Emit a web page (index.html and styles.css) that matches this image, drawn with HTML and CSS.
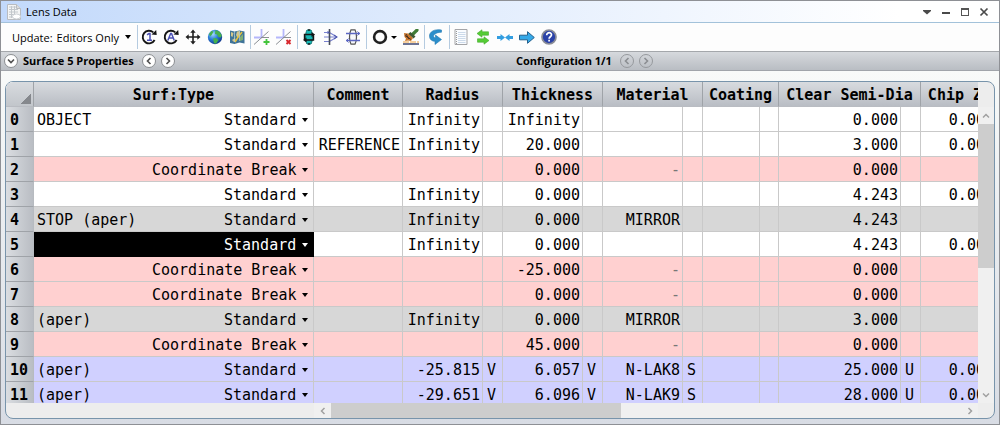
FILE: index.html
```html
<!DOCTYPE html>
<html lang="en">
<head>
<meta charset="utf-8">
<title>Lens Data</title>
<link rel="stylesheet" href="styles.css">
</head>
<body>
<main class="window">
  <header class="titlebar">
    <svg class="title-icon" width="14" height="16" viewBox="0 0 14 16"><path d="M.5.5h9l4 4v11H.5z" fill="#f4f5f5" stroke="#b9bcc0"/><path d="M2 3h7M2 5.500h9M2 8h9M2 10.500h6M2 13h5M4.500 2v12M7.500 2v9" stroke="#c3c8cc" fill="none"/><path d="M9.500.5v4h4" fill="#ddd" stroke="#b9bcc0"/><ellipse cx="9.500" cy="12.500" rx="4" ry="2.500" fill="#fff" stroke="#ccd0d4"/></svg>
    <h1 class="title">Lens Data</h1>
    <div class="window-controls">
      <button class="win-btn" aria-label="Window menu"><svg width="10" height="10" viewBox="0 0 10 10"><path d="M1 3h8v1L5 7.500 1 4z" fill="#4a4a4a"/></svg></button>
      <button class="win-btn" aria-label="Minimize"><svg width="10" height="10" viewBox="0 0 10 10"><path d="M1 5h8v2H1z" fill="#4a4a4a"/></svg></button>
      <button class="win-btn" aria-label="Maximize"><svg width="10" height="10" viewBox="0 0 10 10"><path d="M1 1.500h8M1.500 1v8M8.500 1v8M1 8.500h8M1 2.500h8" fill="none" stroke="#555"/></svg></button>
      <button class="win-btn" aria-label="Close"><svg width="10" height="10" viewBox="0 0 10 10"><path d="M1.500 1.500l7 7M8.500 1.500l-7 7" stroke="#4a4a4a" stroke-width="1.700"/></svg></button>
    </div>
  </header>

  <div class="toolbar" role="toolbar" aria-label="Lens data tools">
    <div class="update">
      <label for="update">Update:</label>
      <span class="dropdown"><select id="update"><option>Editors Only</option></select></span>
    </div>
    <span class="sep"></span>
    <button class="tool" aria-label="Update once"><svg width="16" height="16" viewBox="0 0 16 16"><path d="M12.300 3.400A6.300 6.300 0 1 0 13.600 11" fill="none" stroke="#151515" stroke-width="1.900"/><path d="M10.500 5.500L15.700 6l-.5-5z" fill="#151515"/><path d="M6 5.800l2-1.300h1v6.500M6 11.300h5" fill="none" stroke="#4a50b5" stroke-width="1.500"/></svg></button>
    <button class="tool" aria-label="Update all"><svg width="16" height="16" viewBox="0 0 16 16"><path d="M12.300 3.400A6.300 6.300 0 1 0 13.600 11" fill="none" stroke="#151515" stroke-width="1.900"/><path d="M10.500 5.500L15.700 6l-.5-5z" fill="#151515"/><path d="M4.800 11.500L7.700 4.500h.8l2.800 7M6 9h4.300" fill="none" stroke="#4a50b5" stroke-width="1.500"/></svg></button>
    <button class="tool" aria-label="Move"><svg width="16" height="16" viewBox="0 0 16 16"><path d="M8 2v12M2 8h12" stroke="#202020" stroke-width="1.600"/><path d="M8 .5l2.700 3.200H5.300zM8 15.500l2.700-3.200H5.300zM.5 8l3.200-2.700v5.400zM15.500 8l-3.200-2.700v5.400z" fill="#202020"/></svg></button>
    <button class="tool" aria-label="Globe"><svg width="16" height="16" viewBox="0 0 16 16"><defs><radialGradient id="globe" cx=".35" cy=".3" r=".8"><stop offset="0" stop-color="#a8dcff"/><stop offset=".45" stop-color="#2c7fda"/><stop offset="1" stop-color="#0a2a80"/></radialGradient></defs><circle cx="8" cy="8" r="7.200" fill="url(#globe)"/><path d="M8.500 1l4 1.700 2.300 3.500-.8 2.300-2.500-.5-1.500-2.500L8 5zM2 5l2.500-3 2 .5L5 5.500 3 7.500zM6 9.500l3-.5 2.500 2L9 14.800l-2-.5z" fill="#45b04e"/></svg></button>
    <button class="tool" aria-label="Map"><svg width="16" height="16" viewBox="0 0 16 16"><path d="M1 1.500l4.500 1 5-1 5 1v12l-5-1-5 1.500-4.500-1z" fill="#3f7398"/><path d="M2 3l2.500 1L3.500 8 2 7zM8 2.500l3-.5-.5 4-2 3L7 6zM3 11l3-2 1 3-2 1z" fill="#d3c68c"/><path d="M11 8l3-3v6l-3 1zM5 6l2 2-1.500 1z" fill="#7fae74"/><path d="M13 3L8.500 9 6 13" fill="none" stroke="#e5c13d" stroke-width="1.500"/><path d="M5.500 2v11M10.500 2v10" stroke="#b5cddd" stroke-width=".7"/></svg></button>
    <span class="sep"></span>
    <button class="tool" aria-label="Insert axis"><svg width="16" height="16" viewBox="0 0 16 16"><path d="M7.500 0v8M0 8.500h7.500" stroke="#b5b7fb" stroke-width="1.800" fill="none"/><path d="M0 15.500L14.500 2.500M7 8.500h8" stroke="#8b8f94" fill="none"/><path d="M12.500 10v6M9.500 13h6" stroke="#43c43b" stroke-width="1.800"/></svg></button>
    <button class="tool" aria-label="Delete axis"><svg width="16" height="16" viewBox="0 0 16 16"><path d="M7.500 0v8M0 8.500h7.500" stroke="#b5b7fb" stroke-width="1.800" fill="none"/><path d="M0 15.500L14.500 2.500M7 8.500h8" stroke="#8b8f94" fill="none"/><path d="M10.500 11l4 4M14.500 11l-4 4" stroke="#d7262c" stroke-width="1.900"/></svg></button>
    <span class="sep"></span>
    <button class="tool" aria-label="Reverse elements"><svg width="16" height="16" viewBox="0 0 16 16"><path d="M6 1h4c2 4 2 10 0 14H6C4 11 4 5 6 1z" fill="#18b7b4" stroke="#087270"/><path d="M8 0v2M8 14v2M3.500 11V5.500H12M12.500 5v6H4" fill="none" stroke="#151515" stroke-width="1.400"/><path d="M10.500 3L14 5.500 10.500 8zM5.500 8.500L2 11l3.500 2.500z" fill="#151515"/></svg></button>
    <button class="tool" aria-label="Lens focus"><svg width="16" height="16" viewBox="0 0 16 16"><path d="M1 3.500h5.500L14 8l-7.500 4.500H1M1 8h13" fill="none" stroke="#7880cf" stroke-width="1.200"/><path d="M6.500 0v16" stroke="#444a58" stroke-width="1.600"/><path d="M4.500 2.500l2 1-2 1M11 6l3 2-3 2" fill="none" stroke="#4b55a9"/></svg></button>
    <button class="tool" aria-label="Lens rays"><svg width="16" height="16" viewBox="0 0 16 16"><path d="M6 .8h4c2 4 2 10.400 0 14.400H6C4 11.200 4 4.800 6 .8z" fill="#f7f8fa" stroke="#555" stroke-width="1.200"/><path d="M1 4.500h14M1 11.500h14" stroke="#5c67c3" stroke-width="1.500"/><path d="M12.500 2.500l2 2-2 2M3.500 9.500l-2 2 2 2" fill="none" stroke="#5c67c3"/></svg></button>
    <span class="sep"></span>
    <button class="tool tool-menu" aria-label="Aperture"><svg width="16" height="16" viewBox="0 0 16 16"><circle cx="8" cy="8" r="5.900" fill="none" stroke="#202020" stroke-width="2.600"/></svg></button>
    <button class="tool" aria-label="Paint"><svg width="16" height="16" viewBox="0 0 16 16"><path d="M14 1l-4 4" stroke="#3f7c35" stroke-width="3.200" stroke-linecap="round"/><path d="M7.500 3l5 4.500-2 2-5.500-4.500z" fill="#3d5a34"/><path d="M1 4l4 .5 5 4.500-2 3-3-.5-3 .5 1-2.500L1.500 8z" fill="#c8752c"/><path d="M3 5l3 5M2 6.500l6 4" stroke="#4b321f"/><path d="M0 13h16" stroke="#efa13f" stroke-width="1.200" stroke-dasharray="6 1"/><path d="M0 15h16" stroke="#202b5b" stroke-width="1.300"/></svg></button>
    <span class="sep"></span>
    <button class="tool" aria-label="Undo"><svg width="16" height="16" viewBox="0 0 16 16"><path d="M13.500 1C6.500-.5 1 3 1.500 7.500 1.700 10.500 4 12.300 7 12.300V15.500L13.500 10.500 7.500 6v2.800C4 8.500 5 3.500 13.500 3.200z" fill="#2c8ecb" stroke="#277cb4" stroke-width=".6"/></svg></button>
    <span class="sep"></span>
    <button class="tool" aria-label="Report"><svg width="16" height="16" viewBox="0 0 16 16"><path d="M2 .5h12v15H2z" fill="#fafcff" stroke="#a4a5a8"/><path d="M5 3.500h7.500M5 5.500h7.500M5 7.500h7.500M5 9.500h7.500M5 11.500h7.500M5 13.500h7.500" stroke="#ccdaea"/><path d="M3.500 2v13" stroke="#999" stroke-dasharray="1 1"/></svg></button>
    <button class="tool" aria-label="Swap"><svg width="16" height="16" viewBox="0 0 16 16"><path d="M2 4.500L7 .8v2h6.500v3.400H7v2z" fill="#55cc35" stroke="#45a92d" stroke-width=".6"/><path d="M14 11.500L9 7.800v2H2.500v3.400H9v2z" fill="#55cc35" stroke="#45a92d" stroke-width=".6"/></svg></button>
    <button class="tool" aria-label="Collapse columns"><svg width="16" height="16" viewBox="0 0 16 16"><path d="M0 7h3.500V5L8 8.500 3.500 12v-2H0zM16 7h-3.500V5L8 8.500l4.500 3.500v-2H16z" fill="#329de0"/></svg></button>
    <button class="tool" aria-label="Next"><svg width="16" height="16" viewBox="0 0 16 16"><path d="M.5 6.200h8V2.700L15.300 8.500l-6.800 5.800v-3.500h-8z" fill="#35a9e8" stroke="#24618e"/></svg></button>
    <button class="tool" aria-label="Help"><svg width="16" height="16" viewBox="0 0 16 16"><circle cx="8" cy="8" r="7" fill="#2a42a8" stroke="#8b8d96" stroke-width="1.700"/><path d="M5.700 6.200C5.700 2.700 10.800 3 10.500 6c-.2 1.800-2.400 1.700-2.400 3.700M8.100 10.800v1.700" fill="none" stroke="#fff" stroke-width="1.700"/></svg></button>
  </div>

  <div class="properties">
    <div class="prop-group">
      <button class="round" aria-label="Expand properties"><svg width="8" height="8" viewBox="0 0 8 8"><path d="M1 2.500l3 3 3-3"/></svg></button>
      <h2 class="prop-title">Surface 5 Properties</h2>
      <button class="round" aria-label="Previous surface"><svg width="8" height="8" viewBox="0 0 8 8"><path d="M5.500 1l-3 3 3 3"/></svg></button>
      <button class="round" aria-label="Next surface"><svg width="8" height="8" viewBox="0 0 8 8"><path d="M2.500 1l3 3-3 3"/></svg></button>
    </div>
    <div class="prop-group">
      <h2 class="prop-title">Configuration 1/1</h2>
      <button class="round" disabled aria-label="Previous configuration"><svg width="8" height="8" viewBox="0 0 8 8"><path d="M5.500 1l-3 3 3 3"/></svg></button>
      <button class="round" disabled aria-label="Next configuration"><svg width="8" height="8" viewBox="0 0 8 8"><path d="M2.500 1l3 3-3 3"/></svg></button>
    </div>
  </div>

  <section class="workspace">
    <div class="grid-frame">
      <div class="grid-view">
        <table class="lens">
          <colgroup><col class="c-num"><col class="c-type"><col class="c-comment"><col class="c-value"><col class="c-flag"><col class="c-value"><col class="c-flag"><col class="c-value"><col class="c-flag"><col class="c-coating"><col class="c-coating-flag"><col class="c-semi"><col class="c-flag"><col class="c-chip"><col class="c-flag"></colgroup>
          <thead>
            <tr><th class="corner" aria-label="Select all"></th><th>Surf:Type</th><th>Comment</th><th colspan="2">Radius</th><th colspan="2">Thickness</th><th colspan="2">Material</th><th colspan="2">Coating</th><th colspan="2">Clear Semi-Dia</th><th colspan="2">Chip Zone</th></tr>
          </thead>
          <tbody>
            <tr><th>0</th><td class="type"><div class="type-cell">OBJECT<span class="dropdown"><select aria-label="Surface 0 type"><option>Standard</option></select></span></div></td><td></td><td>Infinity</td><td></td><td>Infinity</td><td></td><td></td><td></td><td></td><td></td><td>0.000</td><td></td><td>0.000</td><td></td></tr>
            <tr><th>1</th><td class="type"><div class="type-cell"><span class="dropdown"><select aria-label="Surface 1 type"><option>Standard</option></select></span></div></td><td>REFERENCE</td><td>Infinity</td><td></td><td>20.000</td><td></td><td></td><td></td><td></td><td></td><td>3.000</td><td></td><td>0.000</td><td></td></tr>
            <tr class="break"><th>2</th><td class="type"><div class="type-cell"><span class="dropdown"><select aria-label="Surface 2 type"><option>Coordinate Break</option></select></span></div></td><td></td><td></td><td></td><td>0.000</td><td></td><td class="muted">-</td><td></td><td></td><td></td><td>0.000</td><td></td><td></td><td></td></tr>
            <tr><th>3</th><td class="type"><div class="type-cell"><span class="dropdown"><select aria-label="Surface 3 type"><option>Standard</option></select></span></div></td><td></td><td>Infinity</td><td></td><td>0.000</td><td></td><td></td><td></td><td></td><td></td><td>4.243</td><td></td><td>0.000</td><td></td></tr>
            <tr class="mirror"><th>4</th><td class="type"><div class="type-cell">STOP (aper)<span class="dropdown"><select aria-label="Surface 4 type"><option>Standard</option></select></span></div></td><td></td><td>Infinity</td><td></td><td>0.000</td><td></td><td>MIRROR</td><td></td><td></td><td></td><td>4.243</td><td></td><td></td><td></td></tr>
            <tr><th>5</th><td class="type selected"><div class="type-cell"><span class="dropdown"><select aria-label="Surface 5 type"><option>Standard</option></select></span></div></td><td></td><td>Infinity</td><td></td><td>0.000</td><td></td><td></td><td></td><td></td><td></td><td>4.243</td><td></td><td>0.000</td><td></td></tr>
            <tr class="break"><th>6</th><td class="type"><div class="type-cell"><span class="dropdown"><select aria-label="Surface 6 type"><option>Coordinate Break</option></select></span></div></td><td></td><td></td><td></td><td>-25.000</td><td></td><td class="muted">-</td><td></td><td></td><td></td><td>0.000</td><td></td><td></td><td></td></tr>
            <tr class="break"><th>7</th><td class="type"><div class="type-cell"><span class="dropdown"><select aria-label="Surface 7 type"><option>Coordinate Break</option></select></span></div></td><td></td><td></td><td></td><td>0.000</td><td></td><td class="muted">-</td><td></td><td></td><td></td><td>0.000</td><td></td><td></td><td></td></tr>
            <tr class="mirror"><th>8</th><td class="type"><div class="type-cell">(aper)<span class="dropdown"><select aria-label="Surface 8 type"><option>Standard</option></select></span></div></td><td></td><td>Infinity</td><td></td><td>0.000</td><td></td><td>MIRROR</td><td></td><td></td><td></td><td>3.000</td><td></td><td></td><td></td></tr>
            <tr class="break"><th>9</th><td class="type"><div class="type-cell"><span class="dropdown"><select aria-label="Surface 9 type"><option>Coordinate Break</option></select></span></div></td><td></td><td></td><td></td><td>45.000</td><td></td><td class="muted">-</td><td></td><td></td><td></td><td>0.000</td><td></td><td></td><td></td></tr>
            <tr class="glass"><th>10</th><td class="type"><div class="type-cell">(aper)<span class="dropdown"><select aria-label="Surface 10 type"><option>Standard</option></select></span></div></td><td></td><td>-25.815</td><td class="flag">V</td><td>6.057</td><td class="flag">V</td><td>N-LAK8</td><td class="flag">S</td><td></td><td></td><td>25.000</td><td class="flag">U</td><td>0.000</td><td></td></tr>
            <tr class="glass"><th>11</th><td class="type"><div class="type-cell">(aper)<span class="dropdown"><select aria-label="Surface 11 type"><option>Standard</option></select></span></div></td><td></td><td>-29.651</td><td class="flag">V</td><td>6.096</td><td class="flag">V</td><td>N-LAK9</td><td class="flag">S</td><td></td><td></td><td>28.000</td><td class="flag">U</td><td>0.000</td><td></td></tr>
          </tbody>
        </table>
      </div>
      <div class="scroll-y">
        <button class="scroll-btn" aria-label="Scroll up"><svg width="8" height="8" viewBox="0 0 8 8"><path d="M1 5.500l3-3 3 3"/></svg></button>
        <div class="track"><div class="thumb"></div></div>
        <button class="scroll-btn" aria-label="Scroll down"><svg width="8" height="8" viewBox="0 0 8 8"><path d="M1 2.500l3 3 3-3"/></svg></button>
      </div>
      <div class="scroll-x">
        <button class="scroll-btn" aria-label="Scroll left"><svg width="8" height="8" viewBox="0 0 8 8"><path d="M5.500 1l-3 3 3 3"/></svg></button>
        <div class="track"><div class="thumb"></div></div>
        <button class="scroll-btn" aria-label="Scroll right"><svg width="8" height="8" viewBox="0 0 8 8"><path d="M2.500 1l3 3-3 3"/></svg></button>
      </div>
    </div>
  </section>
</main>
</body>
</html>
```

FILE: styles.css
```css
* { box-sizing: border-box; }

body {
  margin: 0;
  font-family: "Open Sans", "Noto Sans", sans-serif;
  font-size: 11px;
  color: #000;
}

button, select {
  appearance: none;
  border: 0;
  margin: 0;
  padding: 0;
  background: none;
  color: inherit;
  font: inherit;
}

svg { display: block; flex: none; }

.window {
  display: flex;
  flex-direction: column;
  height: 100vh;
  border: 1px solid #8e9095;
}

/* Title bar */
.titlebar {
  display: flex;
  align-items: center;
  height: 22px;
  padding: 0 6px;
  border-bottom: 1px solid #a3c2da;
  background: linear-gradient(90deg, #c2d9fb, #fff 90%);
}
.title {
  margin: 0 0 0 5px;
  font-size: 11px;
  font-weight: 400;
}
.window-controls {
  display: flex;
  margin-left: auto;
}
.win-btn {
  display: grid;
  place-items: center;
  width: 19px;
  height: 18px;
}

/* Toolbar */
.toolbar {
  display: flex;
  align-items: center;
  height: 28px;
  padding-left: 11px;
  background: #fdfdfd;
}
.update {
  display: flex;
  flex: none;
  gap: 4px;
  width: 123px;
}
.dropdown {
  display: flex;
  align-items: center;
  gap: 5px;
}
.dropdown::after {
  content: "";
  border: 3px solid transparent;
  border-top: 4px solid currentColor;
  border-bottom: 0;
}
.sep {
  width: 1px;
  height: 24px;
  margin-left: 2px;
  background: #b5cbe0;
}
.tool {
  display: grid;
  place-items: center;
  width: 22px;
  height: 22px;
}
.tool-menu {
  display: flex;
  align-items: center;
  gap: 3px;
  width: 33px;
  padding-left: 5px;
}
.tool-menu::after {
  content: "";
  border: 3px solid transparent;
  border-top: 3px solid #000;
  border-bottom: 0;
}

/* Properties bar */
.properties {
  display: grid;
  grid-template-columns: 51.6% 1fr;
  align-items: center;
  height: 20px;
  border-top: 1px solid #a4a7ab;
  border-bottom: 1px solid #a0a4aa;
  background: linear-gradient(#d6d9dd, #b9bdc3);
}
.prop-group {
  display: flex;
  align-items: center;
  gap: 5px;
}
.prop-group:first-child { padding-left: 3px; }
.prop-title {
  margin: 0;
  padding-right: 3px;
  font-size: 11px;
  line-height: 18px;
  font-weight: 700;
}
.round {
  display: grid;
  place-items: center;
  width: 14px;
  height: 14px;
  border: 1px solid #8b8e92;
  border-radius: 50%;
  background: #fff;
}
.round path {
  fill: none;
  stroke: #505050;
  stroke-width: 1.6;
}
.round:disabled {
  border-color: #96999d;
  background: none;
}
.round:disabled path { stroke: #8b8e92; }

/* Data grid */
.workspace {
  display: flex;
  flex: 1;
  min-height: 0;
  padding: 10px 4px 5px;
  background: linear-gradient(#f8faf9, #d8dce4);
}
.grid-frame {
  display: grid;
  grid-template: minmax(0, 1fr) 15px / minmax(0, 1fr) 16px;
  flex: 1;
  min-width: 0;
  overflow: hidden;
  border: 1px solid #7894ab;
  border-radius: 8px;
  background: #ededed;
}
.grid-view {
  overflow: hidden;
  background: #fff;
}
.lens {
  width: 1011px;
  table-layout: fixed;
  border-spacing: 0;
  font: 15px/22px "DejaVu Sans Mono", monospace;
}
.c-num { width: 28px; }
.c-type { width: 280px; }
.c-comment { width: 89px; }
.c-value { width: 80px; }
.c-flag { width: 20px; }
.c-coating { width: 57px; }
.c-coating-flag { width: 19px; }
.c-semi { width: 122px; }
.c-chip { width: 76px; }

.lens th, .lens td {
  height: 25px;
  padding: 2px 2px 0;
  border-right: 1px solid #c9c9c9;
  border-bottom: 1px solid #c9c9c9;
  text-align: right;
  white-space: nowrap;
}
.lens thead th {
  padding: 2px 0 0;
  border-color: #9fa3a8;
  border-bottom-color: #b9bcc2;
  background: linear-gradient(#d8dbdf, #b9bdc4);
  text-align: center;
}
.lens tbody th {
  padding: 2px 0 0 4px;
  border-color: #9fa3a8;
  border-right-color: #b7bbc0;
  background: linear-gradient(90deg, #dadde1, #b9bdc3);
  text-align: left;
}
.lens thead .corner {
  background:
    linear-gradient(135deg, transparent 50%, #85888d 50%) 15px 12px / 10px 10px no-repeat,
    linear-gradient(#d8dbdf, #c2c6cb);
}
.break td { background: #ffd0d0; }
.mirror td { background: #d7d7d7; }
.glass td { background: #d0d0ff; }
.lens .muted { color: #777; }
.lens .flag {
  padding-left: 4px;
  text-align: left;
}
.lens .type { padding: 2px 5px 0 3px; }
.lens .selected {
  border-color: #000;
  background: #000;
  color: #fff;
}
.type-cell {
  display: flex;
  align-items: center;
}
.type-cell .dropdown { margin-left: auto; }
.type-cell select { height: 22px; }

/* Scroll bars */
.scroll-y {
  display: flex;
  flex-direction: column;
  padding-top: 25px;
}
.scroll-x {
  display: flex;
  padding-left: 308px;
}
.track {
  flex: 1;
  background: #f0f0f0;
}
.thumb { background: #cdcdcd; }
.scroll-y .thumb { height: 55%; }
.scroll-x .thumb { height: 100%; width: 46%; }
.scroll-btn {
  display: grid;
  place-items: center;
  background: #f0f0f0;
}
.scroll-y .scroll-btn { height: 17px; }
.scroll-x .scroll-btn { width: 17px; }
.scroll-btn path {
  fill: none;
  stroke: #a0a0a0;
  stroke-width: 1.5;
}
```
